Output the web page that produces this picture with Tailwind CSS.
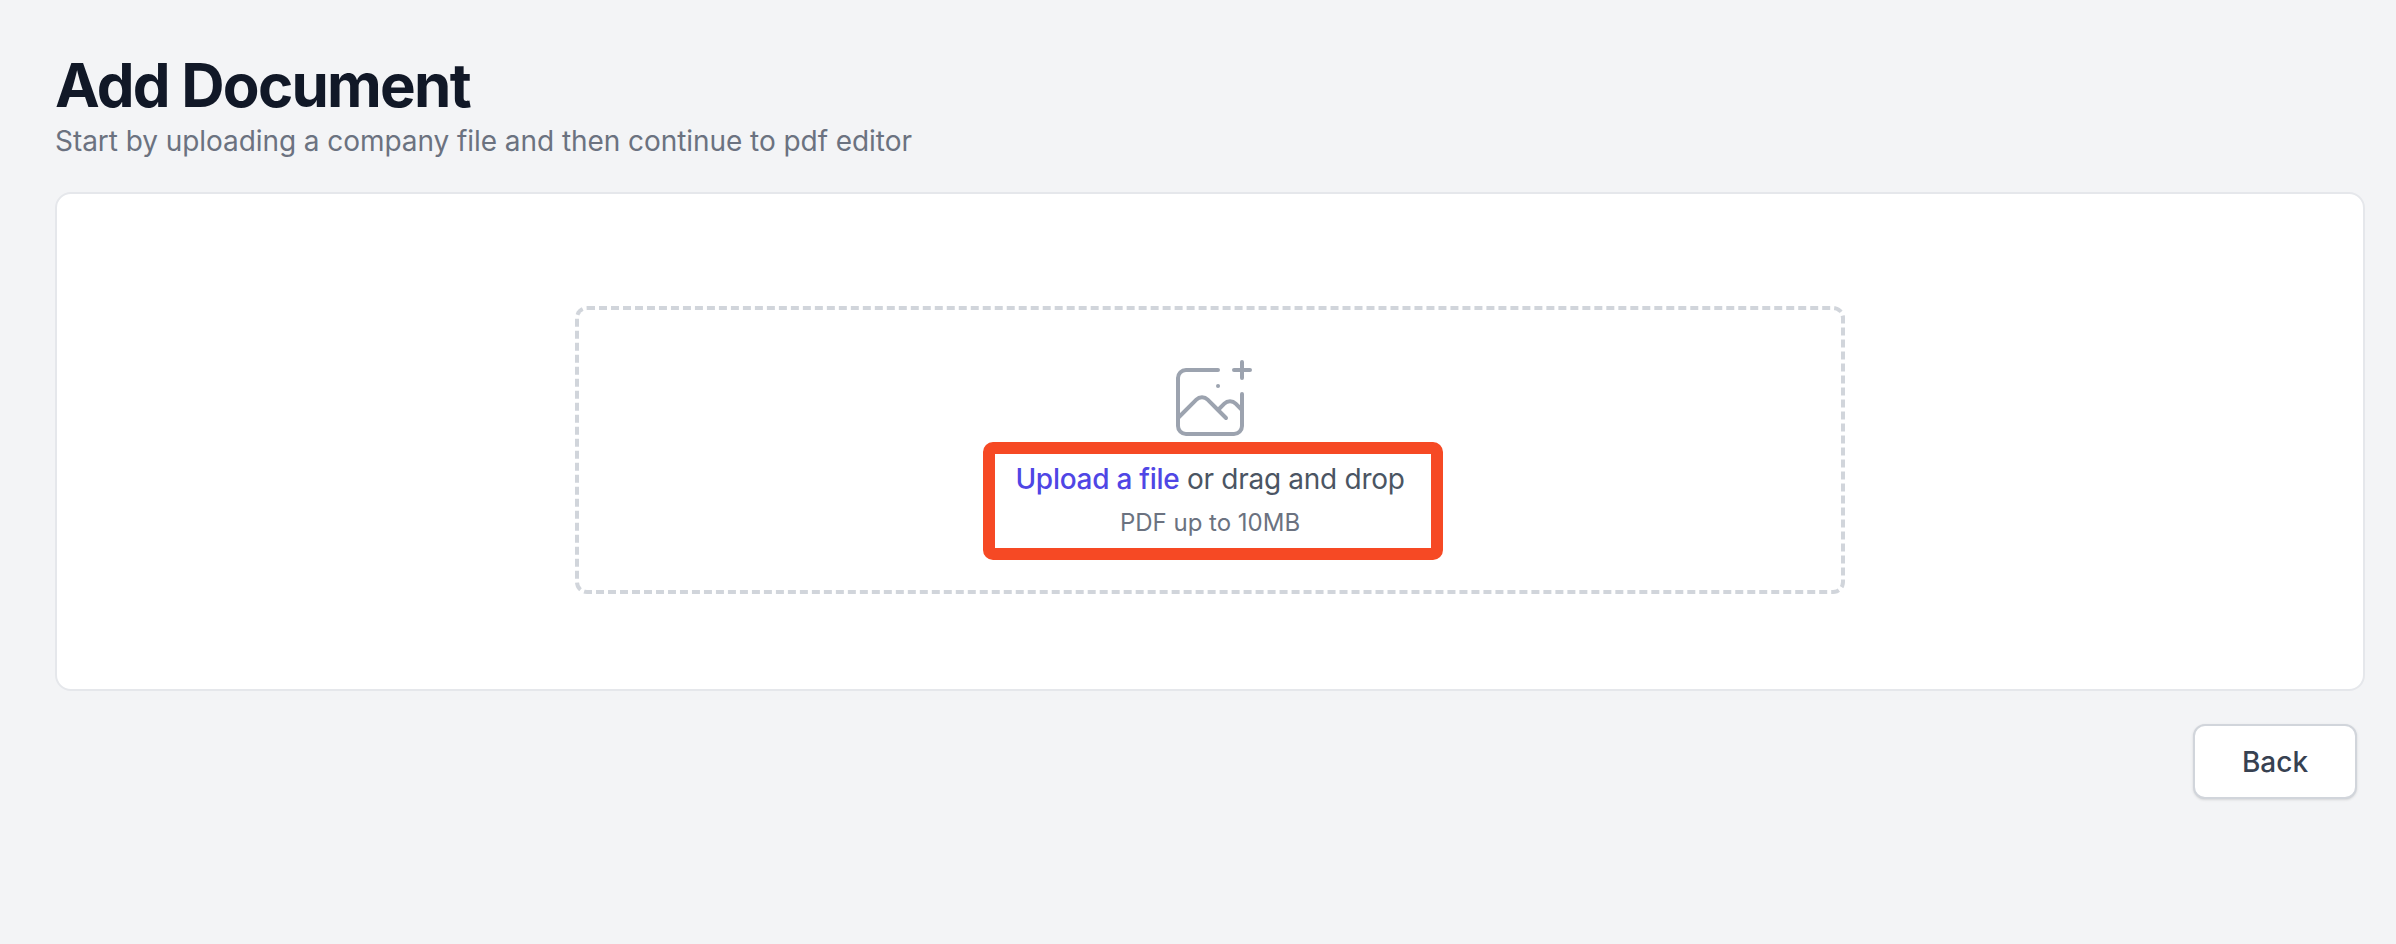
<!DOCTYPE html>
<html lang="en">
<head>
    <meta charset="UTF-8">
    <title>Add Document</title>
    <script src="https://cdn.jsdelivr.net/npm/@tailwindcss/browser@4"></script>
</head>
<body class="bg-[#f3f4f6] font-['Inter',sans-serif] h-[944px] overflow-hidden">
    <div class="pt-[49px] pl-[55px] pr-[31px]">
        <h1 class="text-[60px] leading-[72px] font-bold text-[#111827] tracking-[-1.75px]">Add Document</h1>
        <p class="text-[28px] leading-[40px] text-[#6b7280] tracking-[-0.06px]">Start by uploading a company file and then continue to pdf editor</p>

        <div class="mt-[31px] h-[499px] bg-white border-2 border-[#e5e7eb] rounded-[16px] flex justify-center pt-[112px]">
            <div class="relative w-[1270px] h-[288px] border-4 border-dashed border-[#d1d5db] rounded-[12px] flex flex-col items-center pt-[44px]">
                <svg class="w-[96px] h-[96px] text-[#9ca3af]" viewBox="0 0 48 48" fill="none" stroke="currentColor" stroke-width="2" stroke-linecap="round" stroke-linejoin="round">
                    <path d="M28 8H12a4 4 0 00-4 4v20m32-12v8m0 0v8a4 4 0 01-4 4H12a4 4 0 01-4-4v-4m32-4l-3.172-3.172a4 4 0 00-5.656 0L28 28M8 32l9.172-9.172a4 4 0 015.656 0L28 28m0 0l4 4m4-24h8m-4-4v8m-12 4h.02"/>
                </svg>
                <p class="mt-[9px] text-[28px] leading-[40px] text-[#4b5563] tracking-[-0.28px]"><span class="font-medium text-[#4f46e5]">Upload a file</span> or drag and drop</p>
                <p class="mt-[8px] text-[24px] leading-[32px] text-[#6b7280]">PDF up to 10MB</p>
                <div class="absolute left-[404px] top-[132px] w-[460px] h-[118px] border-[12px] border-[#f64924] rounded-[10px]"></div>
            </div>
        </div>

        <div class="mt-[33px] flex justify-end pr-[8px]">
            <button class="w-[164px] h-[75px] bg-white border-2 border-[#d1d5db] rounded-[12px] shadow-sm text-[28px] font-medium text-[#374151]">Back</button>
        </div>
    </div>
</body>
</html>
